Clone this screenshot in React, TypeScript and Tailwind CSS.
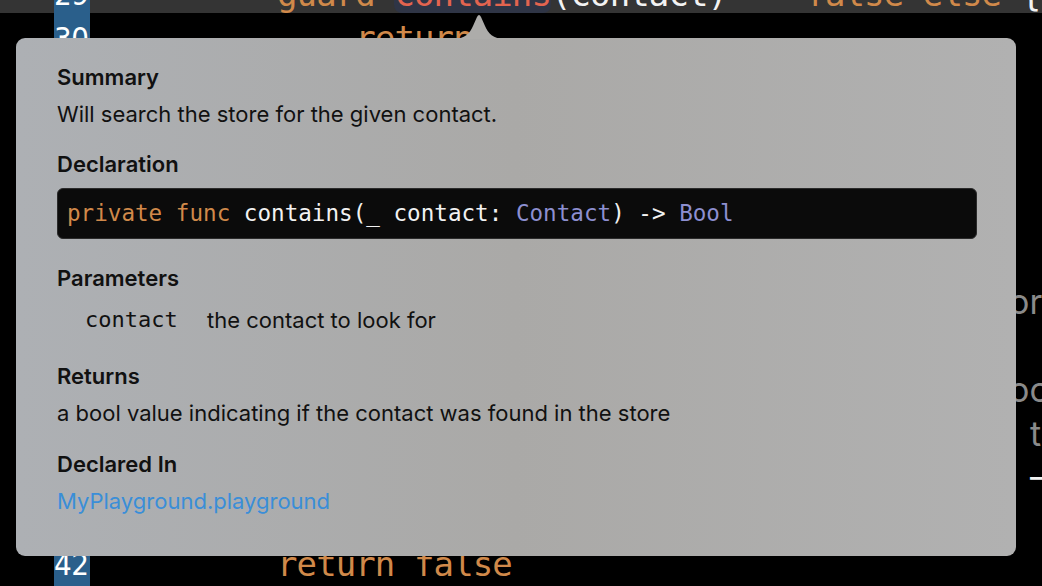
import React from "react";

const mono = "font-['DejaVu_Sans_Mono','Liberation_Mono',monospace]";
const sans = "font-['Inter','Noto_Sans',sans-serif]";

type Tok = { t: string; c?: string };

const KW = "text-[#d0894a]";
const PL = "text-[#f2f2f2]";

const lines: { n: number; toks: Tok[]; side?: React.ReactNode }[] = [
  {
    n: 29,
    toks: [
      { t: "guard ", c: KW },
      { t: "contains", c: "text-[#e3644f] bg-[#2f3546] rounded-b-[8px] h-[40.4px]" },
      { t: "(contact) == ", c: PL },
      { t: "false else ", c: KW },
      { t: "{", c: PL },
    ],
  },
  { n: 30, toks: [{ t: "    return", c: KW }] },
  { n: 31, toks: [{ t: "}", c: PL }] },
  { n: 32, toks: [] },
  { n: 33, toks: [] },
  { n: 34, toks: [] },
  { n: 35, toks: [] },
  { n: 36, toks: [], side: <span className="ml-[1009px] text-[#8a8a8a]">or</span> },
  { n: 37, toks: [] },
  { n: 38, toks: [], side: <span className="ml-[1009px] text-[#8a8a8a]">oc</span> },
  { n: 39, toks: [], side: <span className="ml-[1030px] text-[#8a8a8a]">t</span> },
  { n: 40, toks: [], side: <span className="ml-[1030px] text-[#f2f2f2]">—</span> },
  { n: 41, toks: [] },
  { n: 42, toks: [{ t: "return false", c: KW }] },
];

function Arrow() {
  return (
    <svg
      width="52"
      height="25"
      viewBox="0 0 52 25"
      className="absolute left-[437px] -top-[24px]"
    >
      <path
        d="M0 25 C12 25 17 19 20 12 L24 3 Q26 -1 28 3 L32 12 C35 19 40 25 52 25 Z"
        fill="#adacaa"
      />
    </svg>
  );
}

function Heading({ children, className = "" }: { children: React.ReactNode; className?: string }) {
  return <div className={`font-semibold text-[22px] leading-[26px] text-[#111] ${className}`}>{children}</div>;
}

function Body({ children, className = "" }: { children: React.ReactNode; className?: string }) {
  return <div className={`text-[22px] leading-[26px] text-[#111] ${className}`}>{children}</div>;
}

export default function App() {
  return (
    <div className="relative w-[1042px] h-[586px] overflow-hidden bg-black">
      <div className={`${mono} text-[34px] tracking-[-0.9px] leading-[43.9px] -mt-[27.4px]`}>
        {lines.map((l) => (
          <div
            key={l.n}
            className={`flex items-start h-[43.9px] whitespace-pre ${
              l.n === 29 ? "bg-[linear-gradient(#343434_40.4px,transparent_40.4px)]" : ""
            }`}
          >
            <div className="w-[54px] shrink-0" />
            <div className="w-[36px] h-[43.9px] shrink-0 bg-[#2a5f8b] text-white text-[31px] tracking-[-0.5px] font-['Liberation_Sans_Narrow','DejaVu_Sans_Condensed',sans-serif] text-right pr-[2px]">
              {l.n}
            </div>
            <div className="pl-[187px] flex items-start">
              {l.toks.map((k, i) => (
                <span key={i} className={`inline-block ${k.c}`}>
                  {k.t}
                </span>
              ))}
            </div>
            {l.side && <div className={`absolute left-0 ${sans} text-[34px] tracking-normal`}>{l.side}</div>}
          </div>
        ))}
      </div>

      <div className="absolute left-[16px] top-[38px] w-[1000px] h-[518px] rounded-[9px] bg-linear-to-r from-[#adb0b4] via-[#aaa9a7] to-[#b1b1b1]">
        <Arrow />
        <div className={`${sans} pl-[41px] pt-[26px]`}>
          <Heading>Summary</Heading>
          <Body className="mt-[11px]">Will search the store for the given contact.</Body>

          <Heading className="mt-[24px]">Declaration</Heading>
          <div className="mt-[11px] w-[920px] h-[51px] rounded-[6px] bg-[#0b0b0b] border border-[#2b2b2b] flex items-center pl-[9px]">
            <span className={`${mono} text-[22.6px] whitespace-pre`}>
              <span className={KW}>private func </span>
              <span className={PL}>contains(_ contact: </span>
              <span className="text-[#8d8fd0]">Contact</span>
              <span className={PL}>) -&gt; </span>
              <span className="text-[#8d8fd0]">Bool</span>
            </span>
          </div>

          <Heading className="mt-[26px]">Parameters</Heading>
          <div className="mt-[16px] flex items-center text-[22px] leading-[26px] text-[#111]">
            <span className={`${mono} text-[22px] ml-[28px] w-[122px]`}>contact</span>
            <span>the contact to look for</span>
          </div>

          <Heading className="mt-[30px]">Returns</Heading>
          <Body className="mt-[11px]">a bool value indicating if the contact was found in the store</Body>

          <Heading className="mt-[25px]">Declared In</Heading>
          <div className="mt-[11px] text-[22px] leading-[26px] text-[#3a8ed8]">MyPlayground.playground</div>
        </div>
      </div>
    </div>
  );
}
